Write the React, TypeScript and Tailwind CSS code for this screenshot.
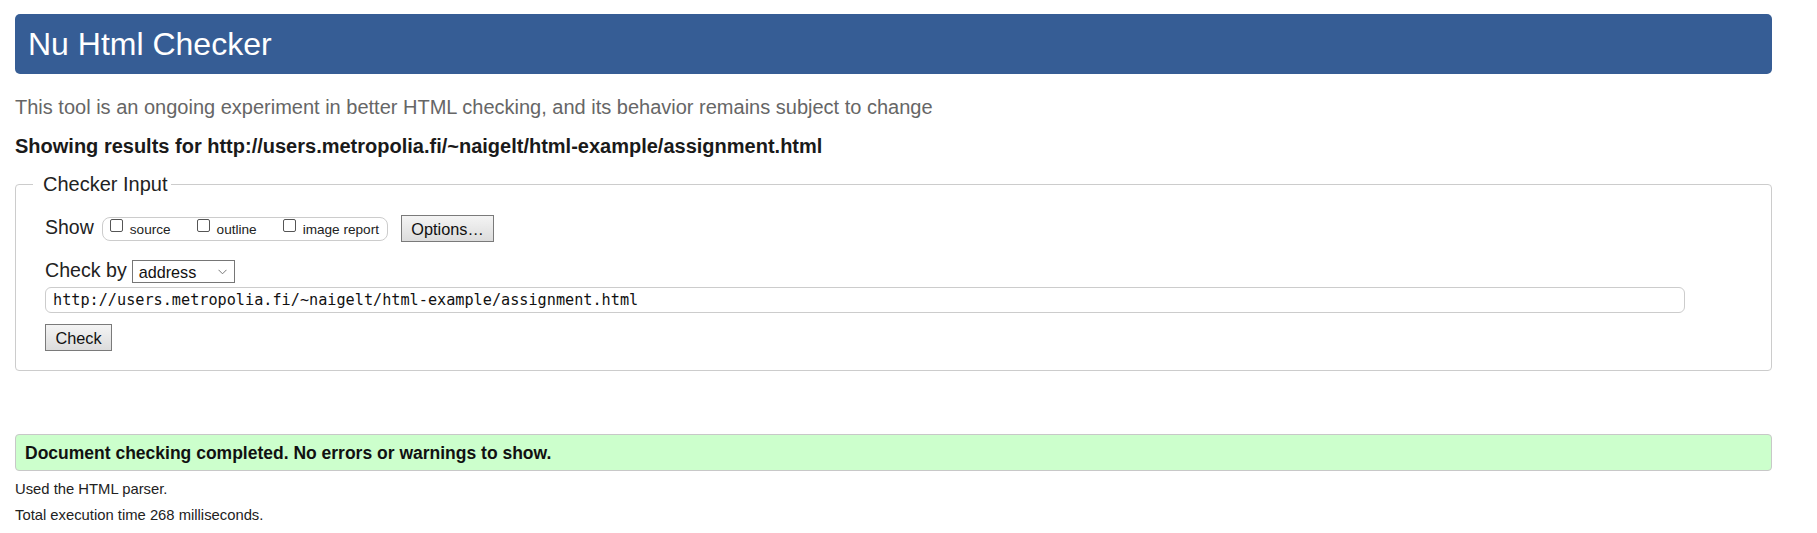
import React from "react";

function Box() {
  return <span className="block w-[13px] h-[13px] border border-[#555] rounded-[2px] bg-white mb-[7px] shrink-0" />;
}

export default function App() {
  return (
    <div className="min-h-[533px] bg-white pt-[14px] pl-[15px] pr-[45px] font-['Liberation_Sans',Arial,sans-serif] text-[#222]">
      <div className="h-[60px] rounded-[5px] bg-[#365d95] pl-[13px] pt-[12px]">
        <h1 className="text-[32px] leading-[36px] font-normal text-white">Nu Html Checker</h1>
      </div>

      <p className="mt-[21px] text-[20px] leading-[24px] text-[#666]">
        This tool is an ongoing experiment in better HTML checking, and its behavior remains subject to change
      </p>

      <p className="mt-[15px] text-[20px] leading-[24px] font-bold text-[#1a1a1a]">
        Showing results for http://users.metropolia.fi/~naigelt/html-example/assignment.html
      </p>

      <fieldset className="mt-[14px] border border-[#cccccc] rounded-[4px] pl-[17px] pt-[19px] pb-[19px]">
        <legend className="pl-[10px] pr-[3px] text-[20px] leading-[24px] text-[#222]">Checker Input</legend>
        <div className="pl-[12px]">
          <div className="flex items-center h-[27px]">
            <span className="text-[19.5px] leading-[24px] mb-[3px]">Show</span>
            <div className="ml-[8px] h-[24px] flex items-center gap-[26px] border border-[#cccccc] rounded-[8px] pl-[7px] pr-[8px] text-[13.6px]">
              <div className="flex items-center">
                <Box />
                <span className="ml-[7px] mt-[3px]">source</span>
              </div>
              <div className="flex items-center">
                <Box />
                <span className="ml-[7px] mt-[3px]">outline</span>
              </div>
              <div className="flex items-center">
                <Box />
                <span className="ml-[7px] mt-[3px]">image report</span>
              </div>
            </div>
            <button className="ml-[13px] w-[93px] h-[27px] border border-[#7a7a7a] bg-gradient-to-b from-[#f4f4f4] to-[#dcdcdc] text-[16.3px] leading-[20px] text-[#111]">
              Options…
            </button>
          </div>

          <div className="mt-[18px] flex items-center h-[23px]">
            <span className="text-[19.6px] leading-[24px] mb-[3px]">Check by</span>
            <div className="ml-[5px] w-[103px] h-[23px] border border-[#767676] bg-white flex items-center justify-between pl-[6px] pr-[7px]">
              <span className="text-[16.2px] leading-[20px] text-[#111]">address</span>
              <svg width="9" height="6" viewBox="0 0 9 6" className="mt-[1px]">
                <polyline points="0.5,0.8 4.5,4.8 8.5,0.8" fill="none" stroke="#777" strokeWidth="1" />
              </svg>
            </div>
          </div>

          <div className="mt-[4px] w-[1640px] h-[26px] border border-[#cccccc] rounded-[6px] flex items-center pl-[7px] font-['DejaVu_Sans_Mono',monospace] text-[15.2px] leading-[20px] text-[#111]">
            http://users.metropolia.fi/~naigelt/html-example/assignment.html
          </div>

          <button className="mt-[11px] block w-[67px] h-[27px] border border-[#7a7a7a] bg-gradient-to-b from-[#f4f4f4] to-[#dcdcdc] text-[16.3px] leading-[20px] text-[#111]">
            Check
          </button>
        </div>
      </fieldset>

      <div className="mt-[63px] h-[37px] border border-[#c8c8c8] rounded-[4px] bg-[#ccffcc] flex items-center pl-[9px]">
        <span className="text-[17.5px] leading-[22px] font-bold text-[#111]">
          Document checking completed. No errors or warnings to show.
        </span>
      </div>

      <p className="mt-[5px] text-[14.8px] leading-[26px] text-[#222]">Used the HTML parser.</p>
      <p className="text-[14.8px] leading-[26px] text-[#222]">Total execution time 268 milliseconds.</p>
    </div>
  );
}
